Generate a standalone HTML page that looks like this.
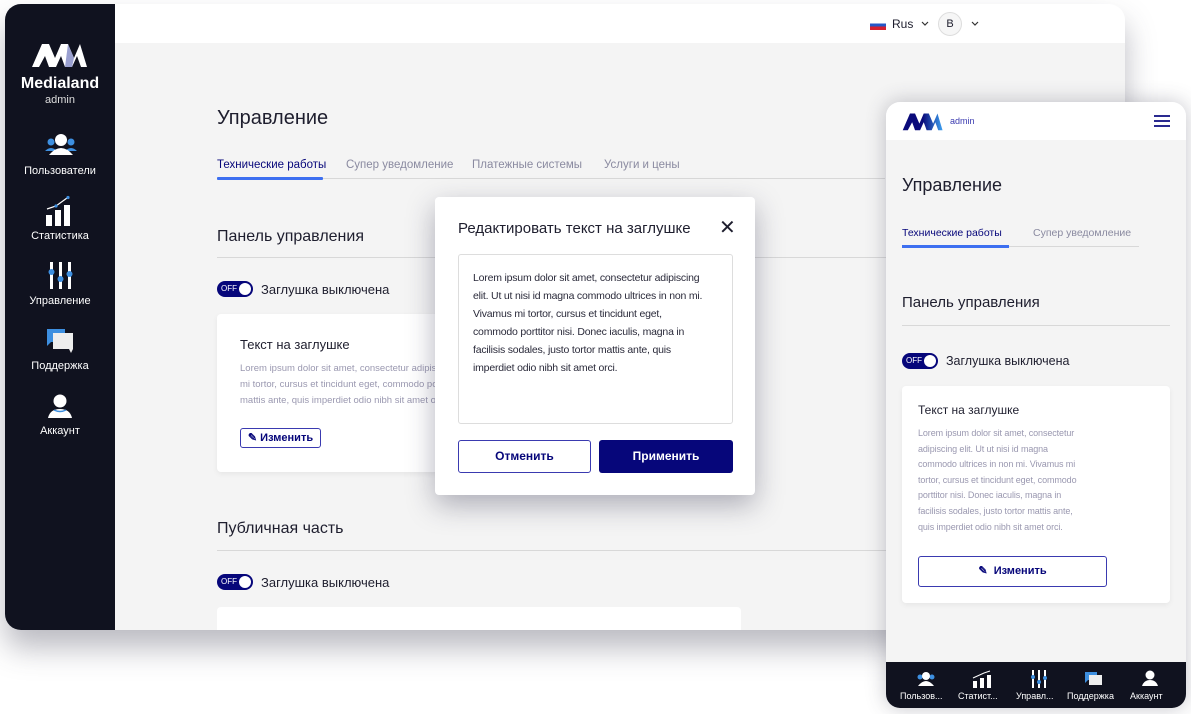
<!DOCTYPE html>
<html><head><meta charset="utf-8"><style>
*{box-sizing:border-box;margin:0;padding:0}
body{width:1191px;height:714px;background:#fff;position:relative;overflow:hidden;font-family:"Liberation Sans",sans-serif;color:#1e1e2e}
.abs{position:absolute}
.desk{left:5px;top:4px;width:1120px;height:626px;border-radius:16px;overflow:hidden;background:#f4f4f4;box-shadow:0 18px 30px rgba(60,60,80,.35)}
.side{left:0;top:0;width:110px;height:626px;background:#10121f;color:#fff;text-align:center}
.hdr{left:110px;top:0;right:0;height:39px;background:#fff}
.nav{position:absolute;left:0;width:110px;font-size:11px;color:#fff}
.tog{width:36px;height:16px;border-radius:8px;background:#06067a;position:absolute}
.tog:before{content:"OFF";position:absolute;left:4px;top:3px;font-size:8px;color:#fff}
.tog:after{content:"";position:absolute;right:2px;top:2px;width:12px;height:12px;border-radius:50%;background:#fff}
.lorem{color:#9a98b0}
.btnO{border:1px solid #3a3ab0;border-radius:3px;color:#06067a;font-weight:bold;text-align:center;background:#fff}
</style></head><body>

<div class="abs desk">
 <div class="abs side">
  <svg class="abs" style="left:26px;top:38px" width="58" height="26" viewBox="0 0 58 26"><path d="M1 25 L11 2 L18 2 L24 16 L30 2 L37 2 L43 16 L49 2 L56 25 L50 25 L46 14 L41 25 L34 25 L30 14 L25 25 L18 25 L14 14 L8 25Z" fill="#fff"/><path d="M37 2 L43 16 L41 25 L34 25Z" fill="#9aa0d0"/></svg>
  <div class="abs" style="left:0;width:110px;top:71px;font-size:16px;font-weight:bold">Medialand</div>
  <div class="abs" style="left:0;width:110px;top:90px;font-size:11px;color:#ddd">admin</div>
  <svg class="abs" style="left:40px;top:129px" width="32" height="25"><circle cx="6" cy="9" r="3.5" fill="#3d8fe0"/><circle cx="26" cy="9" r="3.5" fill="#3d8fe0"/><path d="M0 18 Q6 12 12 18Z M20 18 Q26 12 32 18Z" fill="#3d8fe0"/><circle cx="16" cy="7" r="6" fill="#fff"/><path d="M4 22 Q16 8 28 22Z" fill="#fff"/></svg>
  <div class="nav" style="top:161px">Пользователи</div>
  <svg class="abs" style="left:40px;top:191px" width="30" height="31"><path d="M2 14 L11 11 L22 3" stroke="#fff" stroke-width="1.2" fill="none"/><circle cx="11" cy="11" r="1.6" fill="#3d8fe0"/><circle cx="23" cy="2.5" r="1.6" fill="#3d8fe0"/><rect x="1" y="20" width="6" height="11" fill="#fff"/><rect x="10" y="15" width="6" height="16" fill="#fff"/><rect x="19" y="10" width="6" height="21" fill="#fff"/></svg>
  <div class="nav" style="top:226px">Статистика</div>
  <svg class="abs" style="left:41px;top:258px" width="28" height="27"><rect x="4" y="0" width="3" height="27" fill="#fff"/><rect x="13" y="0" width="3" height="27" fill="#fff"/><rect x="22" y="0" width="3" height="27" fill="#fff"/><circle cx="5.5" cy="10" r="3" fill="#3d8fe0"/><circle cx="14.5" cy="17" r="3" fill="#3d8fe0"/><circle cx="23.5" cy="12" r="3" fill="#3d8fe0"/></svg>
  <div class="nav" style="top:291px">Управление</div>
  <svg class="abs" style="left:42px;top:325px" width="28" height="24"><path d="M0 0 H18 V13 H4 L0 17Z" fill="#3d8fe0"/><path d="M6 4 H26 V20 L24 24 L22 20 H6Z" fill="#eee"/></svg>
  <div class="nav" style="top:356px">Поддержка</div>
  <svg class="abs" style="left:43px;top:390px" width="24" height="25"><circle cx="12" cy="7" r="6.5" fill="#fff"/><path d="M0 24 Q2 15 12 15 Q22 15 24 24Z" fill="#fff"/><path d="M6 16 Q12 19 18 16" stroke="#3d8fe0" stroke-width="1.5" fill="none"/></svg>
  <div class="nav" style="top:421px">Аккаунт</div>
 </div>
 <div class="abs hdr">
  <div class="abs" style="left:755px;top:16px;width:16px;height:10px;background:linear-gradient(#fff 0 33%,#2457c8 33% 66%,#d42030 66%)"></div>
  <div class="abs" style="left:777px;top:13px;font-size:12px">Rus</div>
  <svg class="abs" style="left:806px;top:17px" width="8" height="5"><path d="M1 1 L4 4 L7 1" stroke="#333" stroke-width="1.2" fill="none"/></svg>
  <div class="abs" style="left:823px;top:8px;width:24px;height:24px;border-radius:50%;border:1px solid #ddd;background:#f6f6f6;font-size:11px;text-align:center;line-height:22px">B</div>
  <svg class="abs" style="left:856px;top:17px" width="8" height="5"><path d="M1 1 L4 4 L7 1" stroke="#333" stroke-width="1.2" fill="none"/></svg>
 </div>
 <div class="abs" style="left:212px;top:103px;font-size:20px">Управление</div>
 <div class="abs" style="left:212px;top:155px;font-size:11.5px;color:#06067a">Технические работы</div>
 <div class="abs" style="left:341px;top:155px;font-size:11.5px;color:#8a8aa0">Супер уведомление</div>
 <div class="abs" style="left:467px;top:155px;font-size:11.5px;color:#8a8aa0">Платежные системы</div>
 <div class="abs" style="left:599px;top:155px;font-size:11.5px;color:#8a8aa0">Услуги и цены</div>
 <div class="abs" style="left:212px;top:174px;width:668px;height:1px;background:#d8d8d8"></div>
 <div class="abs" style="left:212px;top:173px;width:106px;height:3px;background:#3d6ff0;border-radius:1px"></div>
 <div class="abs" style="left:212px;top:224px;font-size:16px">Панель управления</div>
 <div class="abs" style="left:212px;top:253px;width:900px;height:1px;background:#d8d8d8"></div>
 <div class="tog" style="left:212px;top:277px"></div>
 <div class="abs" style="left:256px;top:278px;font-size:13px">Заглушка выключена</div>
 <div class="abs" style="left:212px;top:310px;width:530px;height:158px;background:#fff;border-radius:4px;box-shadow:0 2px 6px rgba(0,0,0,.06)">
  <div class="abs" style="left:23px;top:23px;font-size:13px">Текст на заглушке</div>
  <div class="abs lorem" style="left:23px;top:47px;font-size:9.5px;line-height:16px;width:500px">Lorem ipsum dolor sit amet, consectetur adipiscing elit. Ut ut nisi id magna commodo ultrices in non<br>mi tortor, cursus et tincidunt eget, commodo porttitor nisi. Donec iaculis, magna in facilisis sodales<br>mattis ante, quis imperdiet odio nibh sit amet orci.</div>
  <div class="abs btnO" style="left:23px;top:114px;width:81px;height:20px;font-size:11px;line-height:18px">✎ Изменить</div>
 </div>
 <div class="abs" style="left:212px;top:516px;font-size:16px">Публичная часть</div>
 <div class="abs" style="left:212px;top:546px;width:900px;height:1px;background:#d8d8d8"></div>
 <div class="tog" style="left:212px;top:570px"></div>
 <div class="abs" style="left:256px;top:571px;font-size:13px">Заглушка выключена</div>
 <div class="abs" style="left:212px;top:603px;width:524px;height:40px;background:#fff;border-radius:4px"></div>
</div>

<div class="abs" style="left:435px;top:197px;width:320px;height:298px;background:#fff;border-radius:4px;box-shadow:0 10px 28px rgba(40,40,70,.35)">
 <div class="abs" style="left:23px;top:23px;font-size:15px">Редактировать текст на заглушке</div>
 <div class="abs" style="left:284px;top:18px;font-size:20px">✕</div>
 <div class="abs" style="left:23px;top:57px;width:275px;height:170px;border:1px solid #ddd;border-radius:3px">
  <div class="abs" style="left:14px;top:14px;font-size:10.5px;line-height:18px;white-space:nowrap;color:#2a2a3a;letter-spacing:-0.2px">Lorem ipsum dolor sit amet, consectetur adipiscing<br>elit. Ut ut nisi id magna commodo ultrices in non mi.<br>Vivamus mi tortor, cursus et tincidunt eget,<br>commodo porttitor nisi. Donec iaculis, magna in<br>facilisis sodales, justo tortor mattis ante, quis<br>imperdiet odio nibh sit amet orci.</div>
 </div>
 <div class="abs btnO" style="left:23px;top:243px;width:133px;height:33px;font-size:12px;line-height:31px">Отменить</div>
 <div class="abs" style="left:164px;top:243px;width:134px;height:33px;background:#06067a;border-radius:3px;color:#fff;font-size:12px;font-weight:bold;text-align:center;line-height:33px">Применить</div>
</div>

<div class="abs" style="left:886px;top:102px;width:300px;height:606px;border-radius:14px;overflow:hidden;background:#f4f4f4;box-shadow:0 0 20px rgba(60,60,80,.3)">
 <div class="abs" style="left:0;top:0;width:300px;height:38px;background:#fff">
  <svg class="abs" style="left:16px;top:10px" width="42" height="19" viewBox="0 0 58 26"><defs><linearGradient id="g" x1="0" x2="1"><stop offset="0.5" stop-color="#0a0a7a"/><stop offset="1" stop-color="#3da0f0"/></linearGradient></defs><path d="M1 25 L11 2 L18 2 L24 16 L30 2 L37 2 L43 16 L49 2 L56 25 L50 25 L46 14 L41 25 L34 25 L30 14 L25 25 L18 25 L14 14 L8 25Z" fill="url(#g)"/></svg>
  <div class="abs" style="left:64px;top:14px;font-size:9px;color:#3a3ab0">admin</div>
  <div class="abs" style="left:268px;top:13px;width:16px;height:2px;background:#2a2a90;box-shadow:0 5px 0 #2a2a90,0 10px 0 #2a2a90"></div>
 </div>
 <div class="abs" style="left:16px;top:73px;font-size:18px">Управление</div>
 <div class="abs" style="left:16px;top:125px;font-size:10.5px;color:#06067a">Технические работы</div>
 <div class="abs" style="left:147px;top:125px;font-size:10.5px;color:#8a8aa0">Супер уведомление</div>
 <div class="abs" style="left:16px;top:144px;width:237px;height:1px;background:#d8d8d8"></div>
 <div class="abs" style="left:16px;top:143px;width:107px;height:3px;background:#3d6ff0"></div>
 <div class="abs" style="left:16px;top:192px;font-size:15px">Панель управления</div>
 <div class="abs" style="left:16px;top:223px;width:268px;height:1px;background:#d8d8d8"></div>
 <div class="tog" style="left:16px;top:251px"></div>
 <div class="abs" style="left:60px;top:252px;font-size:12.5px">Заглушка выключена</div>
 <div class="abs" style="left:16px;top:284px;width:268px;height:217px;background:#fff;border-radius:4px;box-shadow:0 2px 6px rgba(0,0,0,.06)">
  <div class="abs" style="left:16px;top:17px;font-size:12px">Текст на заглушке</div>
  <div class="abs lorem" style="left:16px;top:40px;font-size:9px;line-height:15.6px;width:200px;letter-spacing:-0.1px">Lorem ipsum dolor sit amet, consectetur<br>adipiscing elit. Ut ut nisi id magna<br>commodo ultrices in non mi. Vivamus mi<br>tortor, cursus et tincidunt eget, commodo<br>porttitor nisi. Donec iaculis, magna in<br>facilisis sodales, justo tortor mattis ante,<br>quis imperdiet odio nibh sit amet orci.</div>
  <div class="abs btnO" style="left:16px;top:170px;width:189px;height:31px;font-size:11px;line-height:29px">✎ &nbsp;Изменить</div>
 </div>
 <div class="abs" style="left:0;top:560px;width:300px;height:46px;background:#10121f;color:#fff;font-size:9px">
  <svg class="abs" style="left:30px;top:9px" width="20" height="16"><circle cx="4" cy="6" r="2.5" fill="#3d8fe0"/><circle cx="16" cy="6" r="2.5" fill="#3d8fe0"/><circle cx="10" cy="5" r="4" fill="#fff"/><path d="M2 15 Q10 5 18 15Z" fill="#fff"/></svg>
  <svg class="abs" style="left:86px;top:8px" width="20" height="18"><path d="M1 8 L12 3 L18 1" stroke="#fff" fill="none"/><rect x="1" y="11" width="4" height="7" fill="#fff"/><rect x="8" y="8" width="4" height="10" fill="#fff"/><rect x="15" y="5" width="4" height="13" fill="#fff"/></svg>
  <svg class="abs" style="left:144px;top:8px" width="18" height="18"><rect x="2" y="0" width="2" height="18" fill="#fff"/><rect x="8" y="0" width="2" height="18" fill="#fff"/><rect x="14" y="0" width="2" height="18" fill="#fff"/><circle cx="3" cy="7" r="2" fill="#3d8fe0"/><circle cx="9" cy="12" r="2" fill="#3d8fe0"/><circle cx="15" cy="8" r="2" fill="#3d8fe0"/></svg>
  <svg class="abs" style="left:199px;top:10px" width="18" height="15"><path d="M0 0 H12 V8 H3 L0 11Z" fill="#3d8fe0"/><path d="M4 3 H17 V13 H4Z" fill="#eee"/></svg>
  <svg class="abs" style="left:256px;top:8px" width="16" height="17"><circle cx="8" cy="5" r="4.5" fill="#fff"/><path d="M0 16 Q2 10 8 10 Q14 10 16 16Z" fill="#fff"/></svg>
  <div class="abs" style="left:14px;top:29px">Пользов...</div>
  <div class="abs" style="left:72px;top:29px">Статист...</div>
  <div class="abs" style="left:130px;top:29px">Управл...</div>
  <div class="abs" style="left:181px;top:29px">Поддержка</div>
  <div class="abs" style="left:244px;top:29px">Аккаунт</div>
 </div>
</div>
</body></html>
